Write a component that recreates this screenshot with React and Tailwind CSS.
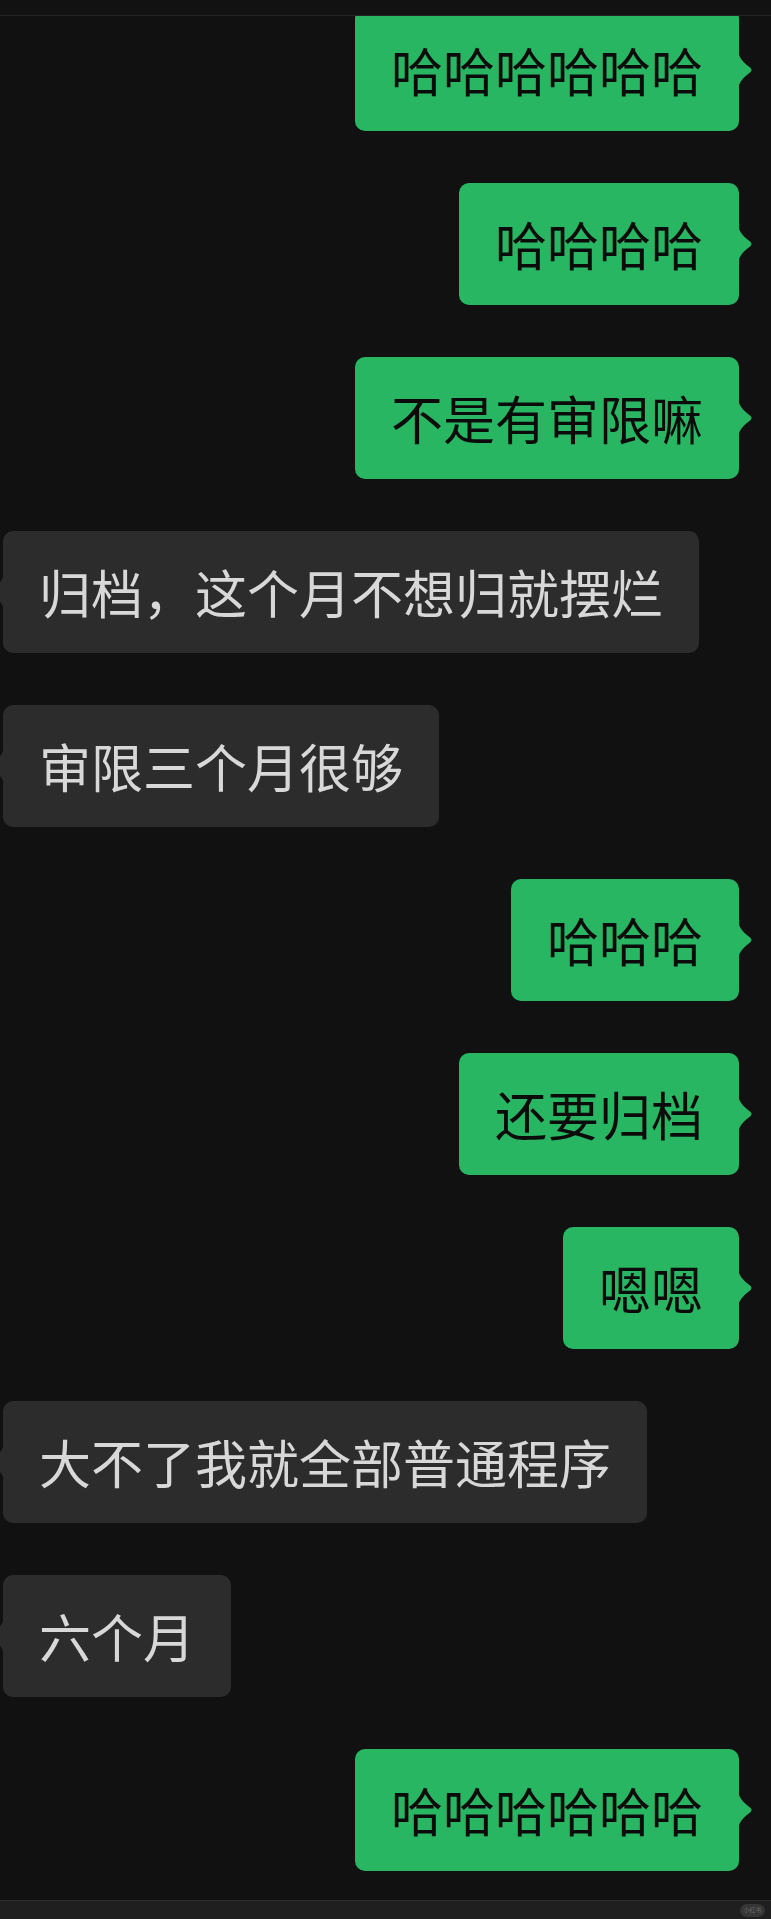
const messages = [
  { from: 'me', text: '哈哈哈哈哈哈' },
  { from: 'me', text: '哈哈哈哈' },
  { from: 'me', text: '不是有审限嘛' },
  { from: 'them', text: '归档，这个月不想归就摆烂' },
  { from: 'them', text: '审限三个月很够' },
  { from: 'me', text: '哈哈哈' },
  { from: 'me', text: '还要归档' },
  { from: 'me', text: '嗯嗯' },
  { from: 'them', text: '大不了我就全部普通程序' },
  { from: 'them', text: '六个月' },
  { from: 'me', text: '哈哈哈哈哈哈' },
]

function Tail({ side, color }) {
  const path = 'M0 0 C2 7 5 10 12 15.5 Q15 18 12 20.5 C5 26 2 29 0 36 Z'
  return (
    <svg
      width="15"
      height="36"
      viewBox="0 0 15 36"
      className={
        side === 'right'
          ? 'absolute top-1/2 -translate-y-1/2 right-[-14px]'
          : 'absolute top-1/2 -translate-y-1/2 left-[-14px] -scale-x-100'
      }
    >
      <path d={path} fill={color} />
    </svg>
  )
}

function Bubble({ from, text }) {
  const mine = from === 'me'
  return (
    <div className={mine ? 'flex justify-end pr-[32px]' : 'flex justify-start pl-[3px]'}>
      <div
        className={
          mine
            ? 'relative h-[122px] flex items-center px-[36px] rounded-[10px] bg-[#28b663] text-[#0b0b0b]'
            : 'relative h-[122px] flex items-center px-[36px] rounded-[10px] bg-[#2c2c2c] text-[#d8d8d8]'
        }
      >
        <span className="text-[52px] leading-none whitespace-nowrap">{text}</span>
        <Tail side={mine ? 'right' : 'left'} color={mine ? '#28b663' : '#2c2c2c'} />
      </div>
    </div>
  )
}

export default function App() {
  return (
    <div
      className="w-[771px] h-[1919px] bg-[#111111] flex flex-col overflow-hidden"
      style={{ fontFamily: '"Noto Sans CJK SC", "Noto Sans", sans-serif' }}
    >
      <div className="h-[16px] shrink-0 bg-[#121212] border-b border-[#232323]" />
      <div className="flex-1 overflow-hidden">
        <div className="mt-[-7px] flex flex-col gap-[52px]">
          {messages.map((m, i) => (
            <Bubble key={i} from={m.from} text={m.text} />
          ))}
        </div>
      </div>
      <div className="h-[19px] shrink-0 bg-[#1f1f1f] border-t border-[#2e2e2e] flex items-center justify-end pr-[6px]">
        <div className="h-[13px] w-[25px] rounded-full bg-[#363636] flex items-center justify-center text-[6px] leading-none text-[#6a6a6a]">
          小红书
        </div>
      </div>
    </div>
  )
}
